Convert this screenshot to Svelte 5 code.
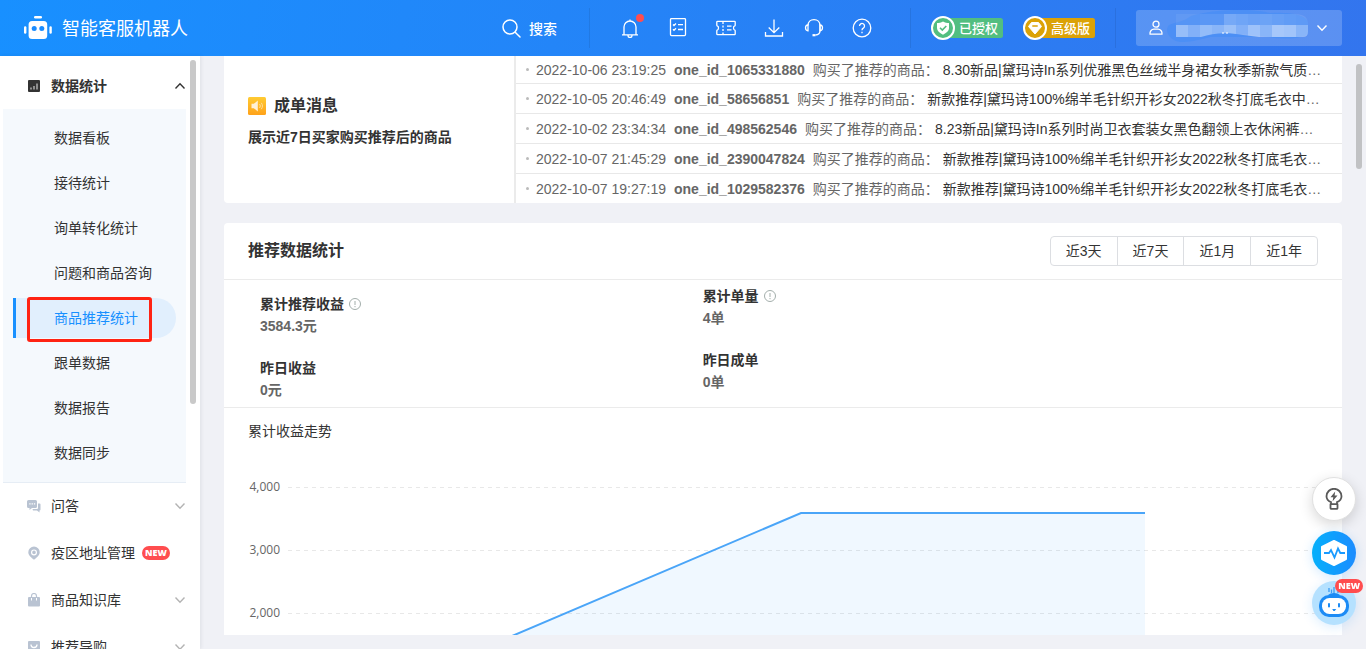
<script lang="ts">
  interface Order {
    time: string;
    buyer: string;
    product: string;
  }

  const subMenu = ['数据看板', '接待统计', '询单转化统计', '问题和商品咨询', '商品推荐统计', '跟单数据', '数据报告', '数据同步'];

  const menu = [
    { label: '问答', icon: 'chat', expandable: true },
    { label: '疫区地址管理', icon: 'pin', isNew: true },
    { label: '商品知识库', icon: 'bag', expandable: true },
    { label: '推荐导购', icon: 'guide', expandable: true },
  ];

  const orders: Order[] = [
    { time: '2022-10-06 23:19:25', buyer: 'one_id_1065331880', product: '8.30新品|黛玛诗In系列优雅黑色丝绒半身裙女秋季新款气质' },
    { time: '2022-10-05 20:46:49', buyer: 'one_id_58656851', product: '新款推荐|黛玛诗100%绵羊毛针织开衫女2022秋冬打底毛衣中' },
    { time: '2022-10-02 23:34:34', buyer: 'one_id_498562546', product: '8.23新品|黛玛诗In系列时尚卫衣套装女黑色翻领上衣休闲裤' },
    { time: '2022-10-07 21:45:29', buyer: 'one_id_2390047824', product: '新款推荐|黛玛诗100%绵羊毛针织开衫女2022秋冬打底毛衣' },
    { time: '2022-10-07 19:27:19', buyer: 'one_id_1029582376', product: '新款推荐|黛玛诗100%绵羊毛针织开衫女2022秋冬打底毛衣' },
  ];

  const ranges = ['近3天', '近7天', '近1月', '近1年'];

  const stats = [
    [
      { label: '累计推荐收益', value: '3584.3元', hint: true },
      { label: '昨日收益', value: '0元' },
    ],
    [
      { label: '累计单量', value: '4单', hint: true },
      { label: '昨日成单', value: '0单' },
    ],
  ];

  const ticks = ['4,000', '3,000', '2,000'];

  // opacity of the masked account name, one value per 12px cell
  const maskTop = [0.06, 0.06, 0.08, 0.08, 0.24, 0.2, 0.17, 0.18, 0.15, 0.12, 0.1];
  const maskBottom = [0.42, 0.3, 0.4, 0.34, 0.44, 0.3, 0.46, 0.34, 0.5, 0.48, 0.34];

  let active = $state('商品推荐统计');
  let open = $state(true);
</script>

{#snippet chevron()}
  <svg class="chevron" width="12" height="12" viewBox="0 0 12 12" fill="none" stroke="currentColor" stroke-width="1.4">
    <path d="M1.5 3.5 6 8.2l4.5-4.7" />
  </svg>
{/snippet}

<div class="page">
  <header class="topbar">
    <div class="brand">
      <svg width="28" height="24" viewBox="0 0 28 24" fill="#fff">
        <rect x="10" y="0" width="8" height="2.6" rx="1.3" />
        <rect x="4.6" y="5" width="18.6" height="18" rx="3.5" />
        <rect x="0" y="10.3" width="2.4" height="7.4" rx="1.2" />
        <rect x="25.4" y="10.3" width="2.4" height="7.4" rx="1.2" />
        <circle cx="10.2" cy="12.6" r="2.5" fill="#1a8cff" />
        <circle cx="17.8" cy="12.6" r="2.5" fill="#1a8cff" />
      </svg>
      <span>智能客服机器人</span>
    </div>

    <button class="search">
      <svg width="19" height="19" viewBox="0 0 19 19" fill="none" stroke="#fff" stroke-width="1.5" stroke-linecap="round">
        <circle cx="8" cy="8" r="7" />
        <path d="m13.2 13.2 4.8 4.8" />
      </svg>
      搜索
    </button>

    <span class="divider"></span>

    <nav class="tools">
      <button class="tool" aria-label="通知">
        <svg viewBox="0 0 20 20">
          <path d="M2 16.8h16M4 16.8V9a6 6 0 0 1 12 0v7.8M10 3V1.6M8 17.5a2 2 0 0 0 4 0" />
        </svg>
        <span class="dot"></span>
      </button>
      <button class="tool" aria-label="任务">
        <svg viewBox="0 0 20 20">
          <rect x="2.5" y="0.6" width="15" height="17" rx="1" />
          <path d="m5 6.500 1 1 2-2M10 6.700h5M5 11.300l1 1 2-2M10 11.500h5" />
        </svg>
      </button>
      <button class="tool" aria-label="优惠券">
        <svg viewBox="0 0 20 20">
          <path d="M1.600 3.300h16.800a.8.8 0 0 1 .8.8v3.200a1 1 0 0 1-.8.900c-1.200.4-1.200 3.200 0 3.600a1 1 0 0 1 .8.900v3.200a.8.8 0 0 1-.8.8H1.600a.8.8 0 0 1-.8-.8v-3.200a1 1 0 0 1 .8-.900c1.200-.4 1.200-3.200 0-3.600a1 1 0 0 1-.8-.900V4.100a.8.8 0 0 1 .8-.8Z" />
          <path d="M7 4v12.600" stroke-dasharray="2 1.500" />
          <path d="M11 8.200h4.500M11 11.800h4.500" />
        </svg>
      </button>
      <div class="tool-pair">
        <button class="tool" aria-label="下载">
          <svg viewBox="0 0 20 20"><path d="M10 1.500v13M4.700 9.500 10 14.600l5.300-5.100M1.500 14v4h17v-4" /></svg>
        </button>
        <button class="tool" aria-label="客服">
          <svg viewBox="0 0 20 20">
            <path d="M4 7.500C4 4 6.500 1.600 10 1.600S16 4 16 7.500v5.300c0 2.600-2 4-4.500 4.200" />
            <path d="M4 6.800C2.200 7 1.500 7.800 1.500 9.800s.7 2.800 2.500 3zM16 6.800c1.800.2 2.500 1 2.500 3s-.7 2.800-2.500 3z" />
            <path d="M8.500 17.200h3" stroke-width="2.200" />
          </svg>
        </button>
      </div>
      <button class="tool" aria-label="帮助">
        <svg viewBox="0 0 20 20">
          <circle cx="10" cy="10" r="8.800" />
          <path d="M7.500 8a2.500 2.500 0 1 1 3.800 2.100C10.400 10.600 10 11 10 12.200M10 13.800v1.400" />
        </svg>
      </button>
    </nav>

    <span class="divider"></span>

    <div class="badges">
      <span class="badge green">
        <svg width="24" height="24" viewBox="0 0 24 24">
          <circle cx="12" cy="12" r="11" fill="#52be80" stroke="#fff" stroke-width="2" />
          <path d="M12 5.500c2 1.200 4 1.600 6 1.600v5c0 3-2.500 5-6 6.600-3.500-1.600-6-3.600-6-6.600v-5c2 0 4-.4 6-1.600Z" fill="#fff" />
          <path d="m9 11.700 2.300 2.300 4-4" fill="none" stroke="#52be80" stroke-width="1.600" />
        </svg>
        <span>已授权</span>
      </span>
      <span class="badge gold">
        <svg width="24" height="24" viewBox="0 0 24 24">
          <circle cx="12" cy="12" r="11" fill="#dba207" stroke="#fff" stroke-width="2" />
          <path d="M8.500 6.500h7l3 4L12 18l-6.500-7.500Z" fill="#fff" stroke="#fff" stroke-linejoin="round" />
          <path d="M9.800 10h4.400" stroke="#dba207" stroke-width="1.500" stroke-linecap="round" />
        </svg>
        <span>高级版</span>
      </span>
    </div>

    <span class="divider"></span>

    <button class="account" aria-label="账号">
      <svg width="14" height="16" viewBox="0 0 14 16" fill="none" stroke="#fff" stroke-width="1.300">
        <circle cx="7" cy="4.200" r="3" />
        <path d="M1 14.200c-.4-3.200 1.800-5 4-5h4c2.200 0 4.400 1.800 4 5Z" stroke-linejoin="round" />
      </svg>
      <svg class="mask" width="142" height="36" viewBox="0 0 142 36">
        <defs>
          <clipPath id="smear">
            <path d="M0 4h128q13 0 13 10v8q0 5-5 5H0Z" />
          </clipPath>
        </defs>
        <path d="M2 15c4-2 14-3 22-9C50-2 88-1 103 3c20-1 38 2 38 10v10c-4 6-22 6-34 5-20-4-38-5-52-3C38 27 20 35 9 31c-9-4-11-12-7-16Z" fill="#4c8ff5" />
        <g clip-path="url(#smear)">
          {#each maskTop as alpha, i}
            <rect x={9 + i * 12} y="4" width="12" height="11" fill="#fff" opacity={alpha} />
          {/each}
          {#each maskBottom as alpha, i}
            <rect x={9 + i * 12} y="15" width="12" height="12" fill="#fff" opacity={alpha} />
          {/each}
        </g>
        <path d="M34 27c12-4 26-5 42-2l16 2Z" fill="#4c8ff5" />
        <path d="M55 23h2M59 23h2" stroke="#fff" />
      </svg>
      {@render chevron()}
    </button>
  </header>

  <div class="body">
    <aside class="sidebar">
      <button class="menu-item parent" class:open onclick={() => (open = !open)}>
        <svg width="14" height="14" viewBox="0 0 14 14">
          <rect x="1" y="1" width="12" height="12" rx="1" fill="#333" />
          <path d="M4 10.500V8.500M7 10.500V7M10 10.500V4.500" stroke="#ccc" stroke-width="1.200" />
        </svg>
        <span>数据统计</span>
        {@render chevron()}
      </button>

      {#if open}
        <ul class="submenu">
          {#each subMenu as item}
            <li>
              <button class="sub-item" class:active={item === active} onclick={() => (active = item)}>{item}</button>
              {#if item === active}<span class="marker"></span>{/if}
            </li>
          {/each}
        </ul>
      {/if}

      <div class="menu">
        {#each menu as item}
          <button class="menu-item">
            <svg width="14" height="14" viewBox="0 0 14 14" fill="#b9c3d2">
              {#if item.icon === 'chat'}
                <path d="M1.500 1h7A1.500 1.500 0 0 1 10 2.500v5A1.500 1.500 0 0 1 8.500 9H5l-2.500 2V9h-1A1.500 1.500 0 0 1 0 7.500v-5A1.500 1.500 0 0 1 1.500 1Z" />
                <path d="M11 4.500h1.500a1 1 0 0 1 1 1v5a1 1 0 0 1-1 1V13.500L10 11.500H6L5.500 10H10a1 1 0 0 0 1-1Z" />
                <path d="M2.300 4.300h1.300v1.300H2.300zM4.600 4.300h1.300v1.300H4.600zM6.900 4.300h1.300v1.300H6.900z" fill="#fff" />
              {:else if item.icon === 'pin'}
                <path d="M7 .5a5.700 5.700 0 0 1 5.700 5.700c0 3.300-3.200 5.400-5.700 7.500-2.500-2.100-5.700-4.200-5.700-7.500A5.700 5.700 0 0 1 7 .5Z" />
                <circle cx="7" cy="6.400" r="2.400" fill="none" stroke="#fff" stroke-width="1.200" />
              {:else if item.icon === 'bag'}
                <rect x="1" y="4" width="12" height="9.500" rx="1" />
                <path d="M4.500 5V3a2.500 2.500 0 0 1 5 0v2" fill="none" stroke="#b9c3d2" stroke-width="1.200" />
                <path d="M4.500 5v2.500M9.500 5v2.500" stroke="#fff" />
              {:else}
                <rect x="1" y="1" width="12" height="12" rx="1" />
                <path d="M4 4.500a3 3 0 0 0 6 0" fill="none" stroke="#fff" stroke-width="1.300" />
              {/if}
            </svg>
            <span>{item.label}</span>
            {#if item.isNew}<em class="new">NEW</em>{/if}
            {#if item.expandable}{@render chevron()}{/if}
          </button>
        {/each}
      </div>
      <span class="thumb"></span>
    </aside>

    <main class="main">
      <section class="card notice">
        <div class="notice-head">
          <h3>
            <svg width="18" height="18" viewBox="0 0 18 18">
              <defs>
                <linearGradient id="horn" x2="0" y2="1">
                  <stop offset="0" stop-color="#ffcb33" />
                  <stop offset="1" stop-color="#ffa21a" />
                </linearGradient>
              </defs>
              <rect width="18" height="18" rx="1.500" fill="url(#horn)" />
              <path d="M3.500 6.800h2.300l4-3.300v11l-4-3.300H3.500Z" fill="#fff1d6" />
              <path d="M11.500 7c1 1.200 1 2.800 0 4M13.300 5.800c1.500 2 1.500 4.400 0 6.400" fill="none" stroke="#ffdf9b" />
            </svg>
            成单消息
          </h3>
          <p>展示近7日买家购买推荐后的商品</p>
        </div>
        <ul class="orders">
          {#each orders as order}
            <li>
              <i></i>
              <span>{order.time}</span>
              <b>{order.buyer}</b>
              <span>购买了推荐的商品：</span>
              <span class="product"><a href="#product">{order.product}</a>…</span>
            </li>
          {/each}
        </ul>
      </section>

      <section class="card report">
        <div class="report-head">
          <h3>推荐数据统计</h3>
          <div class="ranges">
            {#each ranges as range}
              <button>{range}</button>
            {/each}
          </div>
        </div>

        <div class="stats">
          {#each stats as column}
            <dl>
              {#each column as stat}
                <div>
                  <dt>
                    {stat.label}
                    {#if stat.hint}
                      <svg width="12" height="12" viewBox="0 0 12 12" fill="none" stroke="#a3aeab">
                        <circle cx="6" cy="6" r="5.500" />
                        <path d="M6 3v4M6 8v1.200" />
                      </svg>
                    {/if}
                  </dt>
                  <dd>{stat.value}</dd>
                </div>
              {/each}
            </dl>
          {/each}
        </div>

        <h4>累计收益走势</h4>
        <div class="chart">
          <div class="ticks">
            {#each ticks as tick}
              <span>{tick}</span>
            {/each}
          </div>
          <svg class="plot" viewBox="0 0 1030 180" preserveAspectRatio="none">
            {#each ticks as _, i}
              <line x1="0" x2="1030" y1={32.5 + i * 63} y2={32.5 + i * 63} stroke="#e8e8e8" stroke-dasharray="4 4" />
            {/each}
            <path d="M170 204 513 58H857V204Z" fill="#2fa0f8" fill-opacity="0.07" />
            <path d="M170 204 513 58H857" fill="none" stroke="#4aa5f8" stroke-width="2" vector-effect="non-scaling-stroke" />
          </svg>
        </div>
      </section>
      <span class="thumb"></span>
    </main>
  </div>

  <div class="float">
    <button class="tip" aria-label="建议">
      <svg width="18" height="22" viewBox="0 0 18 22" fill="none" stroke="#595959" stroke-width="1.800">
        <path d="M6 16v-1.800C3 13 1.500 11 1.500 8.300a7.500 7.500 0 0 1 15 0c0 2.700-1.500 4.700-4.500 5.900V16" />
        <path d="M5.500 16.200h7V20a.8.8 0 0 1-.8.8H6.300a.8.8 0 0 1-.8-.8Z" stroke-linejoin="round" />
        <path d="M10.200 3.500 5.500 9.200h2.800l-.7 4 4.900-5.700H9.600Z" fill="#595959" stroke="none" />
      </svg>
    </button>
    <button class="monitor" aria-label="诊断">
      <svg width="28" height="28" viewBox="0 0 28 28">
        <path d="m14 2 12 6v12l-12 6-12-6V8Z" fill="#fff" stroke="#fff" stroke-width="2" stroke-linejoin="round" />
        <path d="M4 14h5l2-3 3.500 7.500L18 9.500l2.300 4.500H25" fill="none" stroke="#1a9bff" stroke-width="1.800" />
      </svg>
    </button>
    <button class="robot" aria-label="智能助手">
      <svg width="32" height="34" viewBox="0 0 32 34">
        <path d="M11 2v4M13.500 3.500V7M16 1v7M20 4v3" stroke="#3b9cf5" stroke-width="1.300" />
        <path d="M11 9.500c2-2 8-2 10 0" stroke="#1c8bf5" stroke-width="2" fill="none" />
        <rect x="1" y="9" width="30" height="22" rx="10" fill="#1c8bf5" />
        <rect x="4" y="12" width="24" height="16" rx="7.500" fill="#fff" />
        <path d="M11 18v2.500M21 18v2.500" stroke="#1c8bf5" stroke-width="2" stroke-linecap="round" />
        <path d="M14.800 23.500h2.800L16.200 25Z" fill="#1c8bf5" stroke="#1c8bf5" />
      </svg>
      <em class="new">NEW</em>
    </button>
  </div>
</div>

<style>
  :global(body) {
    margin: 0;
    overflow: hidden;
  }

  .page {
    display: flex;
    flex-direction: column;
    height: 100vh;
    font-family: 'Liberation Sans', 'Noto Sans CJK SC', sans-serif;
    font-size: 14px;
    color: #333;
    background: #f0f1f6;
  }

  button {
    padding: 0;
    border: none;
    background: none;
    font: inherit;
    color: inherit;
    cursor: pointer;
  }

  ul,
  dl,
  dd,
  h3,
  h4,
  p {
    margin: 0;
    padding: 0;
    list-style: none;
  }

  svg {
    display: block;
    flex-shrink: 0;
  }

  /* top bar */
  .topbar {
    display: flex;
    align-items: center;
    flex-shrink: 0;
    height: 56px;
    padding: 0 24px;
    color: #fff;
    background: linear-gradient(100deg, #1890ff, #3375ee);
  }

  .brand {
    display: flex;
    align-items: center;
    gap: 10px;
    margin-right: auto;
    font-size: 18px;
  }

  .brand span {
    padding-bottom: 2px;
  }

  .search {
    display: flex;
    align-items: center;
    gap: 8px;
    margin-right: 32px;
    font-weight: 500;
  }

  .divider {
    width: 1px;
    height: 40px;
    background: rgba(0, 0, 0, 0.08);
  }

  .tools {
    display: flex;
    gap: 28px;
    margin: 0 38px 0 30px;
  }

  .tool-pair {
    display: flex;
    gap: 20px;
  }

  .tool {
    position: relative;
    width: 20px;
    height: 20px;
  }

  .tool svg {
    width: 20px;
    height: 20px;
    fill: none;
    stroke: #fff;
    stroke-width: 1.3;
  }

  .dot {
    position: absolute;
    top: -4px;
    right: -4px;
    width: 8px;
    height: 8px;
    border-radius: 50%;
    background: #ff4d4f;
  }

  .badges {
    display: flex;
    gap: 20px;
    margin: 0 20px;
  }

  .badge {
    display: flex;
    align-items: center;
    gap: 4px;
    width: 72px;
    height: 20px;
    border-radius: 12px 3px 3px 12px;
    font-size: 13px;
    font-weight: 500;
    white-space: nowrap;
  }

  .badge span {
    padding-bottom: 2px;
  }

  .green {
    background: #52be80;
  }

  .gold {
    background: #dba207;
  }

  .account {
    display: flex;
    align-items: center;
    gap: 4px;
    height: 36px;
    margin-left: 20px;
    padding: 0 14px 0 13px;
    border-radius: 3px;
    background: rgba(255, 255, 255, 0.2);
  }

  .account .chevron {
    margin-left: 3px;
  }

  /* sidebar */
  .body {
    display: flex;
    flex: 1;
    min-height: 0;
  }

  .sidebar {
    position: relative;
    flex-shrink: 0;
    box-sizing: border-box;
    width: 200px;
    padding-top: 6px;
    overflow: hidden;
    background: #fff;
    box-shadow: 1px 0 4px rgba(0, 21, 41, 0.08);
  }

  .menu {
    display: flex;
    flex-direction: column;
    gap: 1px;
  }

  .menu-item {
    display: flex;
    align-items: center;
    flex-shrink: 0;
    width: 100%;
    height: 46px;
    padding: 0 14px 0 27px;
  }

  .menu-item > span {
    margin-left: 10px;
    padding-bottom: 2px;
  }

  .menu-item .chevron {
    margin-left: auto;
    color: #b3b3b3;
  }

  .menu-item.parent {
    height: 47px;
    font-weight: 600;
  }

  .menu-item.parent .chevron {
    color: #333;
  }

  .menu-item.open .chevron {
    transform: rotate(180deg);
  }

  .submenu {
    display: flex;
    flex-direction: column;
    gap: 5px;
    margin: 0 14px 0 3px;
    padding: 9px 10px;
    border-bottom: 1px solid #e6edf5;
    background: #f5f9fd;
  }

  .submenu li {
    position: relative;
  }

  .sub-item {
    width: 100%;
    height: 40px;
    padding: 0 0 2px 38px;
    border-left: 3px solid transparent;
    border-radius: 0 20px 20px 0;
    text-align: left;
  }

  .sub-item.active {
    border-left-color: #1890ff;
    background: #e1effd;
    color: #1890ff;
  }

  .marker {
    position: absolute;
    top: -1px;
    left: 14px;
    box-sizing: border-box;
    width: 125px;
    height: 45px;
    border: 3px solid #ff2313;
    border-radius: 3px;
    pointer-events: none;
    z-index: 1;
  }

  .new {
    margin-left: 7px;
    padding: 0 3px;
    border-radius: 7px;
    background: #ff4d4f;
    color: #fff;
    font: 800 9px/14px 'Open Sans', sans-serif;
  }

  .thumb {
    position: absolute;
    top: 4px;
    right: 4px;
    width: 6px;
    height: 344px;
    border-radius: 3px;
    background: #c9c9c9;
  }

  /* content */
  .main {
    position: relative;
    display: flex;
    flex-direction: column;
    flex: 1;
    gap: 20px;
    min-width: 0;
    padding: 0 24px 14px;
  }

  .main > .thumb {
    top: 8px;
    height: 105px;
    background: #c1c2c4;
  }

  .card {
    border-radius: 4px;
    background: #fff;
  }

  .notice {
    display: flex;
    flex-shrink: 0;
    border-top-left-radius: 0;
    border-top-right-radius: 0;
  }

  .notice-head {
    display: flex;
    flex-direction: column;
    justify-content: center;
    gap: 8px;
    box-sizing: border-box;
    width: 292px;
    padding: 0 24px 18px;
    border-right: 2px solid #ebebeb;
  }

  h3 {
    display: flex;
    align-items: center;
    gap: 8px;
    font-size: 16px;
    line-height: 24px;
    font-weight: 600;
  }

  .notice-head p {
    line-height: 22px;
    font-weight: 600;
  }

  .orders {
    flex: 1;
    min-width: 0;
  }

  .orders li {
    display: flex;
    align-items: center;
    gap: 8px;
    box-sizing: border-box;
    height: 30px;
    padding: 0 20px 0 10px;
    border-top: 1px solid #e8e8e8;
    color: #666;
    line-height: 22px;
    white-space: nowrap;
  }

  .orders li:first-child {
    height: 27px;
    border-top: none;
  }

  .orders i {
    width: 3px;
    height: 3px;
    margin-right: -1px;
    border-radius: 50%;
    background: #bbb;
  }

  .orders a {
    color: #333;
    text-decoration: none;
  }

  .product {
    margin-left: -4px;
    overflow: hidden;
  }

  .report {
    flex: 1;
    min-height: 0;
    border-bottom-left-radius: 0;
    border-bottom-right-radius: 0;
    overflow: hidden;
  }

  .report-head {
    display: flex;
    align-items: center;
    justify-content: space-between;
    height: 56px;
    padding: 0 24px;
    border-bottom: 1px solid #ebebeb;
  }

  .ranges {
    display: flex;
  }

  .ranges button {
    height: 30px;
    margin-left: -1px;
    padding: 0 15px 2px;
    border: 1px solid #dcdee2;
  }

  .ranges button:first-child {
    border-radius: 4px 0 0 4px;
  }

  .ranges button:last-child {
    border-radius: 0 4px 4px 0;
  }

  .stats {
    display: grid;
    grid-template-columns: 9fr 13fr;
    height: 127px;
    padding-left: 36px;
    border-bottom: 1px solid #ebebeb;
  }

  dl {
    display: flex;
    flex-direction: column;
    gap: 20px;
    padding-top: 13px;
    line-height: 22px;
    font-weight: 600;
  }

  dl + dl {
    padding-top: 5px;
  }

  dt {
    display: flex;
    align-items: center;
    gap: 5px;
  }

  dd {
    color: #666;
  }

  h4 {
    padding-left: 24px;
    font-size: 14px;
    line-height: 47px;
    font-weight: 400;
  }

  .chart {
    display: flex;
    gap: 8px;
    padding: 0 24px;
  }

  .ticks {
    width: 32px;
    text-align: right;
    color: #666;
    font: 12px/63px 'Open Sans', sans-serif;
  }

  .ticks span {
    display: block;
  }

  .plot {
    flex: 1;
    min-width: 0;
    height: 180px;
  }

  /* floating actions */
  .float {
    position: fixed;
    right: 10px;
    bottom: 24px;
    display: flex;
    flex-direction: column;
    gap: 6px;
  }

  .float button {
    position: relative;
    display: flex;
    align-items: center;
    justify-content: center;
    width: 44px;
    height: 44px;
    border-radius: 50%;
  }

  .float .tip {
    box-sizing: border-box;
    margin-bottom: 4px;
    border: 1px solid #e0e0e0;
    background: #fff;
    box-shadow: 0 4px 14px rgba(0, 0, 0, 0.16);
  }

  .float .monitor {
    background: linear-gradient(90deg, #05b0fb, #1c8cff);
    box-shadow: 0 2px 12px rgba(24, 144, 255, 0.2);
  }

  .float .robot {
    background: #b5e1ff;
    box-shadow: 0 2px 12px rgba(24, 144, 255, 0.16);
  }

  .float .new {
    position: absolute;
    top: -2px;
    right: -7px;
    margin: 0;
  }
</style>
